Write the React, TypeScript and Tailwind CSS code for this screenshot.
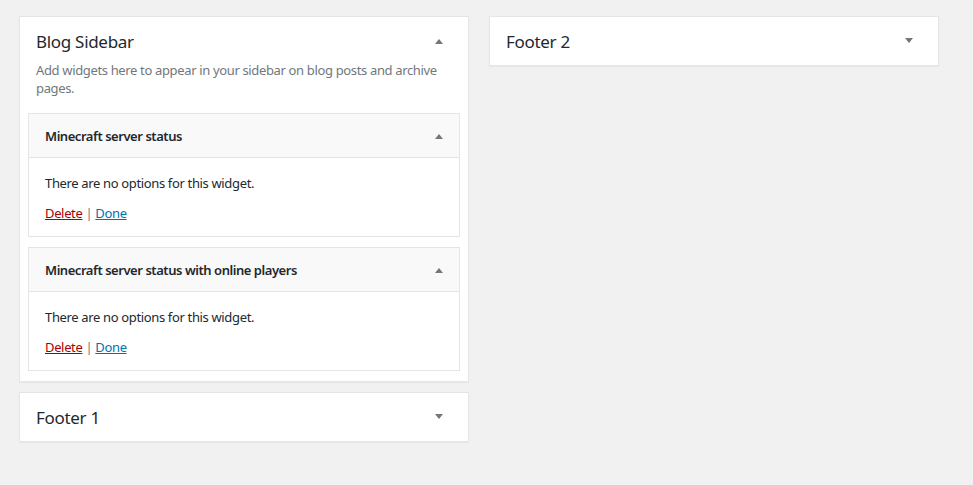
const Arrow = ({ up }: { up?: boolean }) => (
  <svg width="10" height="6" viewBox="0 0 10 6" className="fill-[#72777c]">
    {up ? <path d="M1 6 L5 1 L9 6 Z" /> : <path d="M1 0 L5 5 L9 0 Z" />}
  </svg>
);

const Widget = ({ title }: { title: string }) => (
  <div className="border border-[#e5e5e5] bg-white">
    <div className="flex h-[44px] items-center justify-between border-b border-[#e5e5e5] bg-[#f9f9f9] pl-4 pr-[15px]">
      <span className="pt-[2px] text-[13px] font-semibold tracking-[-0.45px] text-[#23282d]">{title}</span>
      <Arrow up />
    </div>
    <div className="px-4 pb-[14px] pt-[16px] text-[13px] tracking-[-0.35px] text-[#23282d]">
      <p className="leading-[18px]">There are no options for this widget.</p>
      <p className="mt-[12px] leading-[18px]">
        <a href="#" className="text-[#a00] underline">Delete</a>
        <span className="text-[#72777c]"> | </span>
        <a href="#" className="text-[#0073aa] underline">Done</a>
      </p>
    </div>
  </div>
);

const Panel = ({ title, open, children }: { title: string; open?: boolean; children?: React.ReactNode }) => (
  <div className="w-[450px] border border-[#e5e5e5] bg-white shadow-[0_1px_1px_rgba(0,0,0,0.04)]">
    <div className="flex h-[48px] items-center justify-between pl-4 pr-[24px]">
      <h2 className="pt-[2px] text-[17px] font-normal tracking-[-0.3px] text-[#23282d]">{title}</h2>
      <Arrow up={open} />
    </div>
    {children}
  </div>
);

export default function App() {
  return (
    <div className="min-h-[485px] w-[973px] bg-[#f1f1f1] pl-[19px] pt-[16px] font-['Noto_Sans','Open_Sans',sans-serif]">
      <div className="flex gap-[20px] items-start">
        <div className="flex flex-col gap-[10px]">
          <Panel title="Blog Sidebar" open>
            <p className="-mt-[4px] px-4 text-[13px] leading-[18px] tracking-[-0.35px] text-[#72777c]">
              Add widgets here to appear in your sidebar on blog posts and archive pages.
            </p>
            <div className="flex flex-col gap-[10px] px-2 pb-[10px] pt-[16px]">
              <Widget title="Minecraft server status" />
              <Widget title="Minecraft server status with online players" />
            </div>
          </Panel>
          <Panel title="Footer 1" />
        </div>
        <Panel title="Footer 2" />
      </div>
    </div>
  );
}
